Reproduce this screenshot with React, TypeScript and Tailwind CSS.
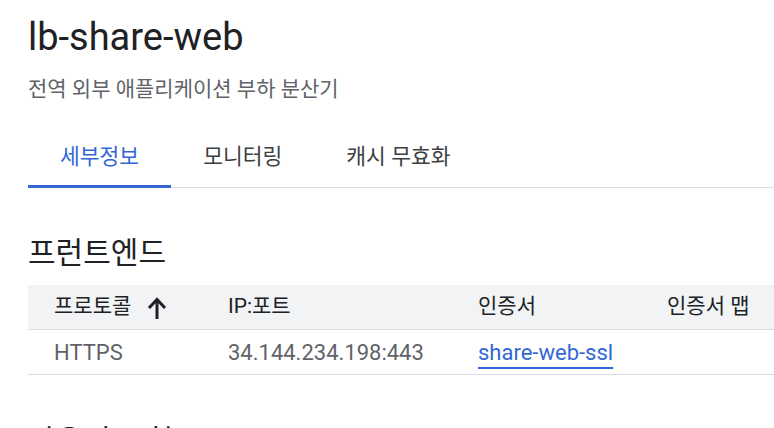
import React, { ReactElement } from 'react'

const sans = 'font-[Roboto,"Noto_Sans_CJK_KR",sans-serif]'

type Column = {
    label: string
    width: string
    sortable?: boolean
}

const columns: Column[] = [
    { label: '프로토콜', width: 'w-[174px]', sortable: true },
    { label: 'IP:포트', width: 'w-[250px]' },
    { label: '인증서', width: 'w-[189px]' },
    { label: '인증서 맵', width: 'w-[200px]' },
]

function ArrowUpIcon(): ReactElement {
    return (
        <svg width="20" height="22" viewBox="0 0 20 22" aria-hidden fill="none" stroke="#202124" strokeWidth="3">
            <path d="M10 3v19" />
            <path d="M2 11l8-8.5 8 8.5" />
        </svg>
    )
}

function Tabs(): ReactElement {
    const tabs = ['세부정보', '모니터링', '캐시 무효화']
    return (
        <div className="flex border-b border-[#dadce0] mt-[38px]">
            {tabs.map((tab, i) => (
                <div
                    key={tab}
                    className={
                        i === 0
                            ? 'px-8 pb-[13px] text-[21.5px] leading-[30px] text-[#3367d6] border-b-[3px] border-[#3367d6] -mb-px'
                            : 'px-8 pb-[13px] text-[21.5px] leading-[30px] text-[#3c4043] border-b-[3px] border-transparent -mb-px'
                    }
                >
                    {tab}
                </div>
            ))}
        </div>
    )
}

function FrontendTable(): ReactElement {
    return (
        <div className="mt-[12px] w-[900px]">
            <div className="flex h-[45px] items-center bg-[#f1f3f4] border-b border-[#dadce0]">
                {columns.map((col) => (
                    <div key={col.label} className={`${col.width} pl-[26px] flex items-center text-[21px] text-[#202124]`}>
                        {col.label}
                        {col.sortable && (
                            <span className="ml-[16px] mt-[1px]">
                                <ArrowUpIcon />
                            </span>
                        )}
                    </div>
                ))}
            </div>
            <div className="flex h-[45px] items-center border-b border-[#dadce0] text-[22px] text-[#5f6368]">
                <div className="w-[174px] pl-[26px]">HTTPS</div>
                <div className="w-[250px] pl-[26px]">34.144.234.198:443</div>
                <div className="w-[189px] pl-[26px]">
                    <a className="text-[#3367d6] underline decoration-2 underline-offset-[7px]" href="#">
                        share-web-ssl
                    </a>
                </div>
                <div className="w-[200px] pl-[26px]" />
            </div>
        </div>
    )
}

export default function App(): ReactElement {
    return (
        <div className={`${sans} h-[428px] w-[774px] overflow-hidden bg-white pl-[28px] pt-[14px]`}>
            <h1 className="text-[38px] leading-[46px] text-[#202124]">lb-share-web</h1>
            <p className="mt-[14px] text-[21px] leading-[30px] text-[#5f6368]">전역 외부 애플리케이션 부하 분산기</p>
            <Tabs />
            <h2 className="mt-[45px] text-[30px] leading-[40px] text-[#202124]">프런트엔드</h2>
            <FrontendTable />
            <h2 className="mt-[46px] text-[30px] leading-[40px] text-[#202124]">라우팅 규칙</h2>
        </div>
    )
}
